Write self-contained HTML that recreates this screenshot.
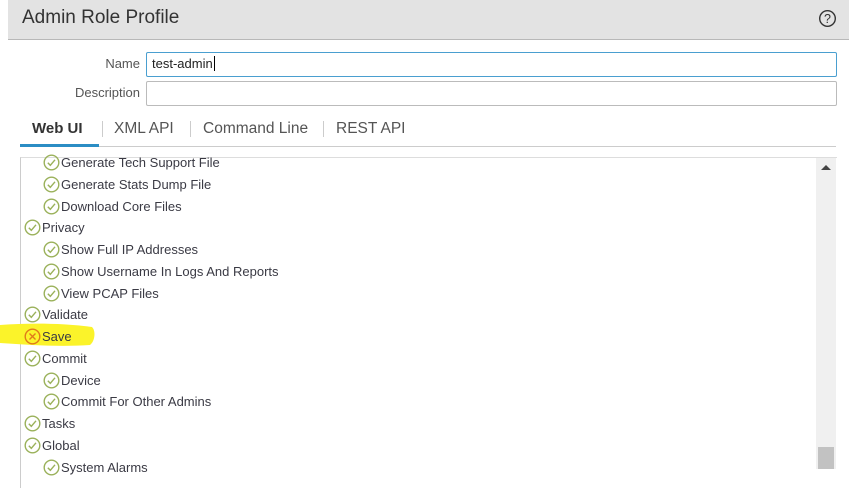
<html><head><style>
body{margin:0;width:849px;height:469px;overflow:hidden;background:#fff;font-family:"Liberation Sans",sans-serif;position:relative}
.hdr{position:absolute;left:8px;top:0;width:841px;height:39px;background:#e3e3e3;border-bottom:1px solid #b8b8b8}
.hdr .t{position:absolute;left:14px;top:7px;font-size:19px;color:#333}
.lbl{position:absolute;font-size:13px;color:#555;text-align:right;width:132px;left:8px}
.inp{position:absolute;left:146px;width:689px;height:23px;border:1px solid #bbb;border-radius:2px;font-size:13px;color:#222}
.tab{position:absolute;top:120px;font-size:15.5px;color:#555}
.sep{position:absolute;top:121px;width:1px;height:16px;background:#ccc}
.box{position:absolute;left:20px;top:157px;width:816px;height:330px;border-left:1px solid #ccc;border-top:1px solid #ddd}
.row{position:absolute;font-size:13px;color:#3a3a44;height:18px;line-height:18px;white-space:nowrap}
.row svg{vertical-align:-4px;margin-right:1px}
</style></head><body>
<div class="hdr"><div class="t">Admin Role Profile</div>
<svg style="position:absolute;left:810px;top:9px" width="19" height="19" viewBox="0 0 19 19"><circle cx="9.5" cy="9.5" r="7.8" fill="none" stroke="#333" stroke-width="1.4"/><text x="9.5" y="14" font-size="12.5" text-anchor="middle" fill="#333" font-family="Liberation Sans">?</text></svg></div>
<div class="lbl" style="top:56px">Name</div>
<div class="inp" style="top:52px;border-color:#4a9fd0"><span style="position:absolute;left:5px;top:3px">test-admin<span style="border-left:1px solid #000;margin-left:1px"></span></span></div>
<div class="lbl" style="top:85px">Description</div>
<div class="inp" style="top:81px"></div>
<div class="tab" style="left:32px;color:#333;font-weight:bold;font-size:15px">Web UI</div>
<div class="sep" style="left:102px"></div>
<div class="tab" style="left:114px">XML API</div>
<div class="sep" style="left:190px"></div>
<div class="tab" style="left:203px">Command Line</div>
<div class="sep" style="left:323px"></div>
<div class="tab" style="left:336px">REST API</div>
<div style="position:absolute;left:20px;top:146px;width:816px;height:1px;background:#ccc"></div>
<div style="position:absolute;left:20px;top:144px;width:79px;height:3px;background:#2b8dc4"></div>
<div class="box"></div>
<div style="position:absolute;left:816px;top:158px;width:20px;height:311px;background:#f0f0f0"></div>
<svg style="position:absolute;left:820px;top:164px" width="12" height="7"><path d="M1 6L6 1L11 6Z" fill="#444"/></svg>
<div style="position:absolute;left:818px;top:447px;width:16px;height:22px;background:#c2c2c2"></div>
<svg style="position:absolute;left:0;top:319px" width="100" height="30"><path d="M0 6 C30 4 60 4 92 8 C96 12 95 22 90 26 C60 28 30 26 0 24Z" fill="#fbf32a"/></svg>
<div id="rows"></div>
<script>
var ok='<svg width="17" height="17" viewBox="0 0 17 17"><circle cx="8.5" cy="8.5" r="7.3" fill="none" stroke="#9ab15a" stroke-width="1.4"/><path d="M4.8 8.8L7.3 11.3L12 5.8" fill="none" stroke="#9ab15a" stroke-width="1.4"/></svg>';
var no='<svg width="17" height="17" viewBox="0 0 17 17"><circle cx="8.5" cy="8.5" r="7.3" fill="none" stroke="#e07a1a" stroke-width="1.4"/><path d="M5.5 5.5L11.5 11.5M11.5 5.5L5.5 11.5" stroke="#e07a1a" stroke-width="1.4"/></svg>';
var r=[[2,"Generate Tech Support File"],[2,"Generate Stats Dump File"],[2,"Download Core Files"],[1,"Privacy"],[2,"Show Full IP Addresses"],[2,"Show Username In Logs And Reports"],[2,"View PCAP Files"],[1,"Validate"],[1,"Save",1],[1,"Commit"],[2,"Device"],[2,"Commit For Other Admins"],[1,"Tasks"],[1,"Global"],[2,"System Alarms"]];
var h='';r.forEach(function(x,i){h+='<div class="row" style="left:'+(x[0]==1?24:43)+'px;top:'+(154+i*21.75)+'px">'+(x[2]?no:ok)+x[1]+'</div>'});
document.getElementById('rows').innerHTML=h;
</script>
</body></html>
